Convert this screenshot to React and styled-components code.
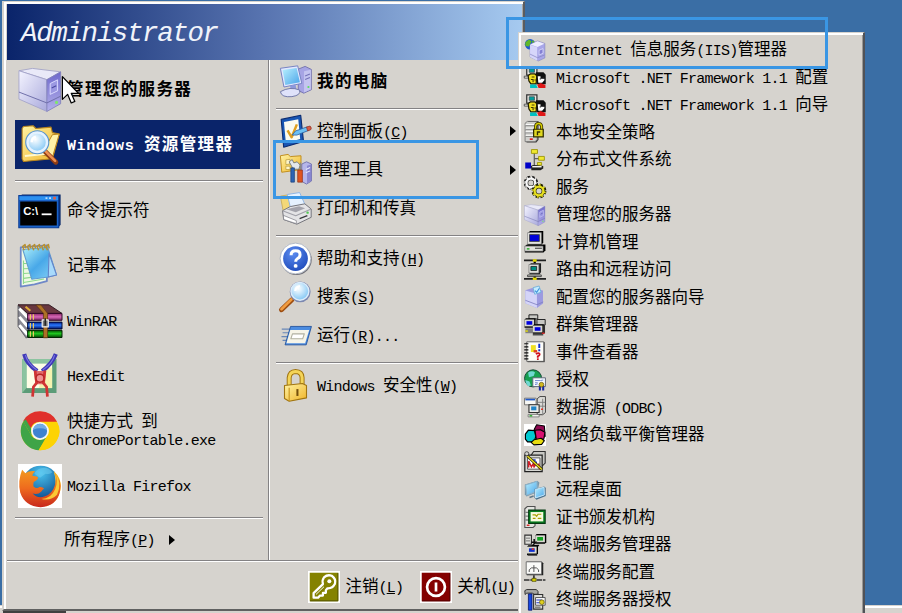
import React from "react";
import styled, { createGlobalStyle, css } from "styled-components";

const GlobalStyle = createGlobalStyle`
  * {
    box-sizing: border-box;
  }
  body {
    margin: 0;
    background: #3a6ea5;
    overflow: hidden;
  }
`;

const Desktop = styled.div`
  position: relative;
  display: flex;
  flex-direction: column;
  width: 902px;
  height: 613px;
  overflow: hidden;
  background: #3a6ea5;
  color: #000;
  font-family: "Noto Sans CJK SC", sans-serif;
  font-size: 16.5px;
  cursor: default;
`;

const StartPanel = styled.div`
  position: relative;
  z-index: 1;
  display: flex;
  flex-direction: column;
  flex: none;
  width: 523px;
  height: 610px;
  margin: 1px 0 -6px 2px;
  border-left: 2px solid #d6d3ce;
  border-top: 1px solid #d6d3ce;
  border-right: 2px solid #5a5c60;
  border-bottom: 2px solid #606060;
  background: #d6d3ce;
  box-shadow: inset 2px 2px 0 #fff, inset -1px 0 0 #a8a6a2;
  padding: 2px 1px 0 3px;
`;

const Header = styled.div`
  flex: none;
  display: flex;
  align-items: center;
  height: 56px;
  padding: 3px 0 0 14px;
  background: linear-gradient(90deg, #0a246a 0%, #5874b0 50%, #a6caf0 100%);
  color: #f0f3fa;
  font: italic 27.5px "Liberation Mono", monospace;
  letter-spacing: -1.375px;
`;

const Columns = styled.div`
  display: flex;
  flex: none;
  height: 500px;
`;

const LeftColumn = styled.div`
  width: 262px;
  padding: 2px 5px 0 8px;
  border-right: 1px solid #848284;
  box-shadow: 1px 0 0 #fff;
`;

const RightColumn = styled.div`
  flex: 1;
  padding: 2px 5px 0 7px;
`;

const Divider = styled.div`
  height: 2px;
  margin: ${({ $gap }) => $gap};
  background: #848284;
  border-bottom: 1px solid #fff;
`;

const bold = css`
  font-weight: 700;
  letter-spacing: 1.375px;
`;

const Label = styled.span`
  white-space: pre;
  line-height: 18px;
  padding-bottom: 3px;
  ${({ $bold }) => $bold && bold}
`;

const Latin = styled.span`
  font-family: "Liberation Mono", monospace;
  font-size: 15px;
  line-height: 0;
  letter-spacing: ${({ $bold }) => ($bold ? "0.62px" : "-0.75px")};
`;

const AppRow = styled.div`
  display: flex;
  align-items: center;
  gap: 5px;
  height: ${({ $selected }) => ($selected ? "49px" : "55px")};
  margin: ${({ $selected }) => ($selected ? "3px 3px 0 0" : "0")};
  padding-left: 3px;
  background: ${({ $selected }) => ($selected ? "#0a246a" : "transparent")};
  color: ${({ $selected }) => ($selected ? "#fff" : "#000")};
`;

const PlaceRow = styled.div`
  display: flex;
  align-items: center;
  gap: 5px;
  height: 38.5px;
  padding-left: 3px;
`;

const AllPrograms = styled.div`
  display: flex;
  align-items: center;
  gap: 14px;
  height: 39px;
  padding-left: 49px;
`;

const Arrow = styled.i`
  flex: none;
  width: 0;
  height: 0;
  border: 5px solid transparent;
  border-left: 6px solid #000;
  border-right: 0;
  margin-left: ${({ $end }) => ($end ? "auto" : "0")};
  margin-right: ${({ $end }) => ($end ? "1px" : "0")};
`;

const Footer = styled.div`
  flex: 1;
  display: flex;
  align-items: center;
  justify-content: flex-end;
  gap: 17px;
  padding-right: 7px;
  padding-top: 3px;
  border-top: 1px solid #848284;
  box-shadow: inset 0 1px 0 #fff;
`;

const FooterButton = styled.div`
  display: flex;
  align-items: center;
  gap: 5px;
`;

const Submenu = styled.div`
  position: absolute;
  z-index: 2;
  left: 518px;
  top: 32px;
  width: 347px;
  height: 600px;
  padding: 3px 0 0 4px;
  background: #d6d3ce;
  border: 1px solid #d6d3ce;
  border-right: 2px solid #505257;
  box-shadow: inset 2px 2px 0 #fff, inset -1px 0 0 #9a9894;
`;

const ToolRow = styled.div`
  display: flex;
  align-items: center;
  gap: 10px;
  height: 27.5px;
  padding-left: 1px;
`;

const Taskbar = styled.div`
  flex: none;
  height: 10px;
  margin-top: 0;
  background: #d6d3ce;
  border-top: 1px solid #d6d3ce;
  box-shadow: inset 0 2px 0 #fff;
  padding: 5px 0 0 3px;
`;

const StartButton = styled.div`
  width: 63px;
  height: 4px;
  background: #404040;
`;

const Highlight = styled.div`
  position: absolute;
  z-index: 3;
  left: ${({ $x }) => $x}px;
  top: ${({ $y }) => $y}px;
  width: ${({ $w }) => $w}px;
  height: ${({ $h }) => $h}px;
  border: 3px solid #3a96e4;
`;

const Pointer = styled.svg`
  position: absolute;
  z-index: 4;
  left: 61px;
  top: 75px;
  width: 18px;
  height: 31px;
`;

const Icon = styled.svg`
  display: block;
  flex: none;
  width: ${({ $size }) => $size}px;
  height: ${({ $size }) => $size}px;
  overflow: visible;
`;

// "&" marks the accelerator letter, as in a Win32 menu resource
function Text({ children, ...rest }) {
  return (
    <Label {...rest}>
      {children.split(/([\x20-\x7e]+)/).map((run, i) => {
        if (i % 2 === 0) return run;
        const at = run.indexOf("&");
        if (at < 0) return <Latin key={i} $bold={rest.$bold}>{run}</Latin>;
        return (
          <Latin key={i} $bold={rest.$bold}>
            {run.slice(0, at)}
            <u>{run[at + 1]}</u>
            {run.slice(at + 2)}
          </Latin>
        );
      })}
    </Label>
  );
}

/* ---------- shapes used by several icons ---------- */

const HiddenDefs = styled.svg`
  position: absolute;
`;

const Gradients = () => (
  <HiddenDefs width="0" height="0">
    <defs>
      <linearGradient id="srvFront" x2="1" y2="1">
        <stop offset="0" stopColor="#f4f4ff" />
        <stop offset="1" stopColor="#a9a9dc" />
      </linearGradient>
      <linearGradient id="srvSide" x2="0" y2="1">
        <stop offset="0" stopColor="#6e68cc" />
        <stop offset="1" stopColor="#b5b2ea" />
      </linearGradient>
      <linearGradient id="gold" x2="1" y2="1">
        <stop offset="0" stopColor="#fff3a4" />
        <stop offset="1" stopColor="#f0b428" />
      </linearGradient>
      <linearGradient id="sky" x2="1" y2="1">
        <stop offset="0" stopColor="#b8f0ff" />
        <stop offset="1" stopColor="#4aa4e8" />
      </linearGradient>
      <radialGradient id="lens" cx=".4" cy=".35" r=".7">
        <stop offset="0" stopColor="#fff" />
        <stop offset="1" stopColor="#7cc4f4" />
      </radialGradient>
      <linearGradient id="pad" x2="1" y2="1">
        <stop offset="0" stopColor="#aef0fa" />
        <stop offset=".5" stopColor="#48a8e8" />
        <stop offset="1" stopColor="#8ad4f8" />
      </linearGradient>
      <linearGradient id="bookA" x2="0" y2="1">
        <stop offset="0" stopColor="#8a2a68" />
        <stop offset=".5" stopColor="#d868b8" />
        <stop offset="1" stopColor="#70205c" />
      </linearGradient>
      <linearGradient id="bookB" x2="0" y2="1">
        <stop offset="0" stopColor="#001a80" />
        <stop offset=".45" stopColor="#2a78ff" />
        <stop offset="1" stopColor="#001060" />
      </linearGradient>
      <linearGradient id="bookC" x2="0" y2="1">
        <stop offset="0" stopColor="#005000" />
        <stop offset=".45" stopColor="#20c820" />
        <stop offset="1" stopColor="#004000" />
      </linearGradient>
      <radialGradient id="globe" cx=".5" cy=".2" r=".8">
        <stop offset="0" stopColor="#48c4f0" />
        <stop offset="1" stopColor="#083c80" />
      </radialGradient>
      <linearGradient id="fox" x2="0" y2="1">
        <stop offset="0" stopColor="#f39a20" />
        <stop offset=".5" stopColor="#ee6a1e" />
        <stop offset="1" stopColor="#c8281c" />
      </linearGradient>
      <radialGradient id="blueBall" cx=".4" cy=".3" r=".8">
        <stop offset="0" stopColor="#5c8cf0" />
        <stop offset="1" stopColor="#1c48b8" />
      </radialGradient>
    </defs>
  </HiddenDefs>
);

const Tower = () => (
  <g strokeLinejoin="round">
    <path d="M.7 2 10.5.3 31 2.8 21 8.5z" fill="#e9e9f8" stroke="#a8a8c8" strokeWidth=".7" />
    <path d="M.7 2 21 8.5V31.6L.7 22.6z" fill="url(#srvFront)" stroke="#a0a0c8" strokeWidth=".6" />
    <path d="M21 8.5 31 2.8V26L21 31.6z" fill="url(#srvSide)" stroke="#8080b8" strokeWidth=".6" />
    <path d="M.7 17.5 21 25.4 31 20.5" fill="none" stroke="#6c6ca8" strokeWidth=".7" />
    <path d="M23.4 11.3 28.8 8.6v8L23.4 19.2z" fill="#9b98e2" stroke="#dcdcff" strokeWidth=".7" />
    <path d="M24.5 14.6l3.3-1.7" stroke="#4a48a0" strokeWidth=".8" />
    <circle cx="28" cy="25" r="1.1" fill="#7ee868" />
  </g>
);

const Screen = ({ x, y, color = "#0000e0" }) => (
  <g transform={`translate(${x} ${y})`}>
    <path d="M0 1 1 0h7v6L7 7H0z" fill="#000" />
    <path d="M0 1h7v5H0z" fill="#d8d8d0" />
    <path d="M1.4 2.2h4.2v2.6H1.4z" fill={color} />
  </g>
);

/* ---------- 32 unit icons, left column ---------- */

const ServerIcon = () => <Tower />;

const ExplorerIcon = () => (
  <g strokeLinejoin="round">
    <path d="M3 4 4 2.5 11 2l2 2 11-1 1 4 5 1-5 18-21 2-1-2z" fill="url(#gold)" stroke="#b8841c" strokeWidth=".8" />
    <path d="M25 8.5 30 8 25 25l-8-2z" fill="#fff2a8" stroke="#b8841c" strokeWidth=".7" />
    <path d="M5 24 24 22" stroke="#fff9d0" strokeWidth="1.6" />
    <path d="M19 20 27.5 28.5" stroke="#8e3c14" strokeWidth="3.6" strokeLinecap="round" />
    <path d="M19.5 20 27 27.5" stroke="#ee9050" strokeWidth="1.8" strokeLinecap="round" />
    <circle cx="14" cy="14" r="7.3" fill="url(#lens)" stroke="#e4f2ff" strokeWidth="2.2" />
    <circle cx="14" cy="14" r="8.4" fill="none" stroke="#5894cc" strokeWidth=".8" />
    <path d="M10 14a4 4 0 0 1 3-4" fill="none" stroke="#fff" strokeWidth="1.8" />
  </g>
);

const ConsoleIcon = () => (
  <g>
    <path d="M1 5.2 3 4h28v22l-2 2.4z" fill="#082868" />
    <path d="M.6 4.8h29v23.4H.6z" fill="#1a62c8" stroke="#0a3c94" strokeWidth=".8" />
    <path d="M1 5.2h28.2V8H1z" fill="#2c90f0" />
    <path d="M1.6 9h26.6v17.6H1.6z" fill="#000" />
    <path d="M20 6.6h1.4M22.6 6.6H24" stroke="#b8dcff" strokeWidth="1.2" />
    <path d="M25.6 5.6h2v2h-2z" fill="#e06048" />
    <text x="3.8" y="18.6" fill="#fff" fontFamily="Liberation Sans, sans-serif" fontWeight="700" fontSize="8.2">
      C:\
    </text>
    <path d="M17.2 18.4h7.2" stroke="#fff" strokeWidth="1.3" />
  </g>
);

const NotepadIcon = () => (
  <g strokeLinejoin="round">
    <path d="M2 2.5 21 1 21 27 12 29.4 2 31z" fill="#eef8e4" stroke="#7088c8" strokeWidth="1.3" />
    <path d="M4 12v17M4 14l15 .5M4 18l15-.5M4 21.5l15-1M4 25l15-2M4 28l15-2.5" stroke="#8ed88c" strokeWidth=".8" fill="none" />
    <path d="M3.5 4 21.6 2.4 28 22.5l-6 1.5-12 1.6z" fill="url(#pad)" stroke="#609cd0" strokeWidth=".8" />
    <path d="M22.6 7 28 22.5 22 24z" fill="#a8dafb" stroke="#6484c8" strokeWidth=".8" />
    {[4.5, 8, 11.5, 15, 18.5, 21.5].map((x) => (
      <path key={x} d={`M${x} 4.6 ${x - 1.2} 1.8 ${x + 0.6} .4 ${x + 1.2} 3.2`} fill="none" stroke="#b89030" strokeWidth="1.1" />
    ))}
  </g>
);

const RarIcon = () => (
  <g strokeLinejoin="round">
    <path d="M0 4.8 8 13v13l-2 2.5L0 20z" fill="#8a8a94" stroke="#404048" strokeWidth=".5" />
    <path d="M1 7 7 13.5M1 13l6 7M1 19l6 7" stroke="#fff" strokeWidth="2.2" />
    <path d="M0 4.2h22.5L32 10.5H7z" fill="#6a3840" stroke="#301820" strokeWidth=".7" />
    <path d="M7 10.5h25v5H7z" fill="url(#bookA)" stroke="#300828" strokeWidth=".7" />
    <path d="M7 16.8h25v5H7z" fill="url(#bookB)" stroke="#000830" strokeWidth=".7" />
    <path d="M7 22.8h25V28H7z" fill="url(#bookC)" stroke="#002000" strokeWidth=".7" />
    <path d="M9 11v4M9 17.5v4M9 23.5v4M11.2 11v4M11.2 17.5v4M11.2 23.5v4" stroke="#e8c860" strokeWidth=".9" />
    <path d="m13 4.4 5.5 6v17.8h3V10.4l-4.8-6z" fill="#ad7026" stroke="#5c3410" strokeWidth=".5" />
    <path d="M5.5 5.6 9 8.6" stroke="#e0ac38" strokeWidth="1.5" />
    <path d="M17.6 15.2h4.4v5h-4.4z" fill="#777" stroke="#eee" strokeWidth=".9" />
    <path d="M19.8 14v5.4" stroke="#222" strokeWidth="1.1" />
  </g>
);

const HexEditIcon = () => (
  <g>
    <path d="M3 3.6h25v24.8H3z" fill="#5c9c78" />
    <path d="M3 3.6h25l-3.4 3.6H6.6v17L3 28.4z" fill="#8cc4a0" />
    <path d="M6.4 7h18.4v17.8H6.4z" fill="#fdfde6" />
    <path d="M20 10h4.8v14.8H15z" fill="#f5f3b0" />
    <path d="M4.5 0Q6 7 14 12.4M27.5 0Q25 7 17.5 12.4" fill="none" stroke="#4038b8" strokeWidth="3" />
    <path d="M5.4.8Q7 7 13.6 11.6M26.6.8Q25 7 18 11.6" fill="none" stroke="#7878e0" strokeWidth=".8" />
    <path d="M11.6 12.4 20.4 12.4 19.6 22h-7z" fill="#e06c6c" />
    <path d="m12.4 12 1.2 9-2.4 3-.6 7M19.6 12l-1.2 9 2.4 3 .6 7" fill="none" stroke="#d03434" strokeWidth="2" />
    <circle cx="16" cy="17.6" r="2.9" fill="#f09090" stroke="#b82424" strokeWidth="1.1" />
  </g>
);

const ChromeIcon = () => (
  <g>
    <circle cx="16" cy="16" r="14" fill="#fdd303" />
    <path d="M3.9 9A14 14 0 0 0 15 30l6-10.4A7 7 0 0 1 10 19.6z" fill="#3fa447" />
    <path d="M3.9 9 10 19.6l-.6-6z" fill="#3fa447" />
    <path d="M16 9h12.2A14 14 0 0 1 15 30l6.5-10z" fill="#fdd303" />
    <path d="M3.9 8.6A14 14 0 0 1 28.4 9.2H16a7 7 0 0 0-6.6 4.6z" fill="#e0302c" />
    <path d="M3.9 9 9.4 18V14L5.6 7.4z" fill="#3fa447" />
    <circle cx="16" cy="16" r="6.5" fill="#f4f6f8" />
    <circle cx="16" cy="16" r="5.2" fill="#3e82d0" />
    <path d="M11 15a5.1 5.1 0 0 1 10 0q-5-2-10 0z" fill="#74ace4" />
  </g>
);

const FirefoxIcon = () => (
  <g>
    <path d="M0 0h32v32H0z" fill="#fff" />
    <circle cx="16.5" cy="14.8" r="13.6" fill="url(#globe)" />
    <path d="M17 3q5-1 8 3-2 2-5 1l-4 3-4-3q1-3 5-4z" fill="#70cdf0" opacity=".55" />
    <path d="M26 5.2Q32 10 31 18 29.5 28 20 31q6-5 7-12 1-7-1-13.8z" fill="#ffd83c" />
    <path
      d="M3 4.2 5.4 6.8Q8 4.6 12.5 5.2 10.5 6.7 10.6 8.8q3.4-.2 4 1.2-.3 1.8-3.2 3-.6 2.8 0 3.6 2.4 1.6 4.2.2 2.4-.4 3.4 1.2-1.2.6-2 2-2.5 2.6-6.4 1.5 3.6 4 9 2 5.6-2 7.4-8.6 1.3-5-.9-9.4 6.5 6.5 4.5 14.4Q28.2 30.8 16.4 31.4 5 31 1.6 20.8-.3 12.2 3 4.2z"
      fill="url(#fox)"
    />
    <path d="M27 6.4q2.5 6 0 12Q24 25.4 17 25.4q7 1.6 11.4-3Q32.4 13.6 27 6.4z" fill="#fbc934" />
  </g>
);

/* ---------- 24 unit icons, right column ---------- */

const ComputerIcon = () => (
  <g strokeLinejoin="round">
    <path d="m14 3 5-2 4.5 2.2V18L18 20.5l-4-2z" fill="#a6a4e4" stroke="#6a68a8" strokeWidth=".6" />
    <path d="M18.2 4.6V20l5-2.2V3.4z" fill="#c4c4f0" />
    <path d="M19 8l3.5-1.4M19 10.5l3.5-1.4" stroke="#7472b8" strokeWidth=".8" />
    <circle cx="21.4" cy="16" r=".8" fill="#5ce060" />
    <path d="M1 2.4 13.6.6l3 12.8L3.6 16z" fill="#e2e8ff" stroke="#7480c0" strokeWidth=".7" />
    <path d="m2.6 3.6 10.2-1.5 2.4 10.4L4.6 14.6z" fill="url(#sky)" />
    <path d="m8 15 4-.8.8 4.2H8.6z" fill="#8c98dc" />
    <path d="M1 19.4q7-4 14-1.2 1.2 3.8-5.6 4.8-7.6.8-8.4-3.6z" fill="#dfe2fa" stroke="#7078a8" strokeWidth=".7" />
  </g>
);

const ControlPanelIcon = () => (
  <g strokeLinejoin="round">
    <path d="m1.6 3.2 14.2-3 2 19L3.4 23.4z" fill="#1856b4" stroke="#0c2c70" strokeWidth=".8" />
    <path d="m3.6 5 10.4-2 1.4 14.4L5 20.4z" fill="#fbfbf0" />
    <path d="m6.2 11.2 3 5L13 6.8" fill="none" stroke="#e0a020" strokeWidth="1.8" />
    <path d="M9.6 14.6 12 11.6 20.6 8.6l1 2.6-8.6 3.4z" fill="#6cc0f4" stroke="#2c60a0" strokeWidth=".6" />
    <path d="M20 8.8 22.6 8q1.6 1.6.4 2.8l-2.2.8z" fill="#d85c48" stroke="#8c2c1c" strokeWidth=".5" />
  </g>
);

const AdminToolsIcon = () => (
  <g strokeLinejoin="round">
    <path d="M1 2 6.6 1l1.6 1.6L16 2v10l-14 2z" fill="url(#gold)" stroke="#c08c1c" strokeWidth=".7" />
    <path d="m5 5 3-.4V8l-3 .4zM5 9.6h3V12H5z" fill="#fff6c8" stroke="#b49838" strokeWidth=".5" />
    <path d="m16.6 8 3.4-1.6L23.6 8v12.4L20 22.6l-3.6-2z" fill="#b6b6ea" stroke="#6868a8" strokeWidth=".6" />
    <path d="M20.4 9.2v13l3-2V8.4z" fill="#8886d0" />
    <path d="M19.6 12l3-1.4M19.6 14.4l3-1.4" stroke="#e8e8ff" strokeWidth=".8" />
    <path d="m7.4 6.4 2.2-1.6 1.2 2.4 2.4-.8 2.2 2.4-1 3h-4z" fill="#e4e8ec" stroke="#687078" strokeWidth=".6" />
    <path d="M8.6 10.8h2.6v10.4H8.6z" fill="#2c64b4" stroke="#183c78" strokeWidth=".5" />
    <path d="M15.6 7v6" stroke="#888" strokeWidth="1" />
    <path d="M13.6 12.4H17v8.8h-3.4z" fill="#e05420" stroke="#902c10" strokeWidth=".5" />
  </g>
);

const PrinterIcon = () => (
  <g strokeLinejoin="round">
    <path d="M1 3 8 1.8l3 14-7.4 1z" fill="#f4d878" stroke="#c0a048" strokeWidth=".5" />
    <path d="m6 1.8 9-1.4 4 9-10.4 3z" fill="#e6f2ff" stroke="#8cb4e4" strokeWidth=".7" />
    <path d="m2.6 13.6 5.6-3 10.6-2 4.6 3.8v6L13 23.4 3.4 20z" fill="#e4e4e6" stroke="#707078" strokeWidth=".7" />
    <path d="m2.6 13.6 9.6 3.6 11.2-4.8" fill="none" stroke="#a0a0a8" strokeWidth=".8" />
    <path d="m5.4 12.6 6.8 2.2 6.8-3-4.4-1.4z" fill="#a4a4ac" />
    <path d="m3.2 17 9.4 3.8V23L3.4 20z" fill="#fff" stroke="#787880" strokeWidth=".5" />
    <path d="m15 19.4 5.6-2.2" stroke="#38383c" strokeWidth="1" />
    <circle cx="20.8" cy="15" r=".9" fill="#50c850" />
  </g>
);

const HelpIcon = () => (
  <g>
    <circle cx="12.6" cy="12.8" r="11.2" fill="#707078" />
    <circle cx="12" cy="12" r="11.2" fill="#fff" stroke="#a4acbc" strokeWidth=".6" />
    <circle cx="12" cy="12" r="9" fill="url(#blueBall)" />
    <path d="M8.8 9.6q0-3.2 3.3-3.2 3.2 0 3.2 2.8 0 1.8-1.8 2.8-1.4.8-1.4 2.4" fill="none" stroke="#fff" strokeWidth="2.2" />
    <circle cx="12.1" cy="17.4" r="1.4" fill="#fff" />
  </g>
);

const SearchIcon = () => (
  <g>
    <path d="M1.8 21.6 9.4 14.4" stroke="#9c4c10" strokeWidth="3.6" strokeLinecap="round" />
    <path d="M1.8 21.2 9 14.2" stroke="#f09c40" strokeWidth="2" strokeLinecap="round" />
    <circle cx="15.4" cy="8.6" r="7.6" fill="#7c88b0" />
    <circle cx="15.2" cy="8.2" r="6.5" fill="url(#lens)" stroke="#dcecfa" strokeWidth="1" />
    <path d="M11.8 8a4 4 0 0 1 3.4-3.6" fill="none" stroke="#fff" strokeWidth="1.6" />
  </g>
);

const RunIcon = () => (
  <g strokeLinejoin="round">
    <path d="M2 7.4h6M2.6 10h5M1.8 12.8h5M2.6 15.6h3" stroke="#6888b8" strokeWidth=".9" />
    <path d="M8.4 5.4H23.6L19.8 18.8H4.4z" fill="#4c8ce0" stroke="#1c4c98" strokeWidth=".6" />
    <path d="M8.2 8H22L19 17.6H5.4z" fill="#f6f4e8" />
    <path d="M9.8 10.8h8.6l-1.2 3.6H8.6z" fill="#fff" stroke="#b0b0a0" strokeWidth=".8" />
  </g>
);

const LockIcon = () => (
  <g strokeLinejoin="round">
    <path d="M7.4 13V6.4q.4-4.4 4.6-4.6 4.6.2 4.8 4.4v5.4" fill="none" stroke="#a07410" strokeWidth="3.6" />
    <path d="M7.4 13V6.4q.4-4.4 4.6-4.6 4.6.2 4.8 4.4v5.4" fill="none" stroke="#f4d458" strokeWidth="2.2" />
    <path d="M4 12 17 10.6l3 1.4v9L7.4 23.4 4 21.4z" fill="url(#gold)" stroke="#a07410" strokeWidth=".8" />
    <path d="M7.4 13.6v9.6" stroke="#c8941c" strokeWidth=".8" />
    <path d="M13.4 14.6v5" stroke="#74500c" strokeWidth="1.5" />
  </g>
);

/* ---------- 16 unit icons, tools submenu ---------- */

const IisIcon = () => (
  <g strokeLinejoin="round">
    <circle cx="4.4" cy="3.8" r="3.8" fill="#2058d0" />
    <path d="M1 2.4 3.6.4 5.6 1.6 3.6 5.4 1 5zM6 .8 8 2.4 6 3.2z" fill="#60b828" />
    <path d="m4.4 4 5.4-2.6 5.4 1.8v10.6L10.4 16l-6-3z" fill="#a8a6e8" stroke="#8484b8" strokeWidth=".4" />
    <path d="M4.4 4.2 9.6 6v9.8L4.4 13z" fill="#d6d6fa" />
    <path d="M4.6 4 9.8 1.6l5 1.8L9.8 5.8z" fill="#eeeeff" />
    <path d="M11 8.2 13.8 7v3.4L11 11.6z" fill="#8480d4" stroke="#e8e8ff" strokeWidth=".5" />
    <path d="m4.4 11 5.4 2.6 5.2-2" fill="none" stroke="#8482c0" strokeWidth=".5" />
  </g>
);

const DotNetIcon = () => (
  <g>
    <path d="M2 .6h7.4v6H2z" fill="#e8e8e4" stroke="#303030" strokeWidth=".9" />
    <path d="M3.8 2h3.8v2.6H3.8z" fill="#00a0a0" stroke="#404040" strokeWidth=".5" />
    <path d="M.2 7.4h3.6v1.4H.2z" fill="#f0f0f0" stroke="#404040" strokeWidth=".6" />
    <path d="M8.6 4.6h5.6l1.6 1.8v6.8H9.2z" fill="#101010" />
    <path d="M3 7 4.6 5.8H8L9.2 7v1.4L8.8 13H5L3.6 11z" fill="#f0e020" stroke="#201c00" strokeWidth=".9" />
    <path d="M5.6 8h2M5 9.8h1.6v2M7.6 10.2h1" fill="none" stroke="#403800" strokeWidth=".8" />
    <path d="M10 7.4h2v1.8h2.8v1.2l-1.6 1.8h-2.8z" fill="#fff" />
    <path d="M11.4 9.4h1M14 8v1" stroke="#202020" strokeWidth=".7" />
    <path d="M4.4 13.4h4.4L10 16H4.4z" fill="#00c0c0" />
    <path d="M9.6 13.6 12 12.4l3.6 1.4V16h-5z" fill="#e01818" />
  </g>
);

const SecurityIcon = () => (
  <g>
    <path d="M1.8 1.6 3.4 0H10.6v13.6L9 15.6H1.8z" fill="#404040" />
    <path d="M.8 1.6 2.4.3h7.2v13l-1.4 1.7H.8z" fill="#d0d0cc" stroke="#606060" strokeWidth=".5" />
    <path d="M1.2 3.4h6.4M1.2 6h6.4M1.2 8.6h6.4M1.2 11.2h6.4" stroke="#808080" strokeWidth=".7" />
    <path d="M1.2 2.6h6.4M1.2 5.2h6.4M1.2 7.8h6.4M1.2 10.4h6.4" stroke="#fff" strokeWidth=".7" />
    <path d="M4.2 13.2h2.2" stroke="#e02020" strokeWidth="1.2" />
    <path d="M8.4 6.6V4Q8.6 1.8 10.6 1.8T12.8 4v2.6" fill="none" stroke="#403800" strokeWidth="2.2" />
    <path d="M8.4 6.6V4Q8.6 1.8 10.6 1.8T12.8 4v2.6" fill="none" stroke="#d8d000" strokeWidth="1" />
    <path d="M7 6h7v5.6H7z" fill="#e0d820" stroke="#302c00" strokeWidth=".9" />
    <path d="M9.8 10.4V8h2" stroke="#302c00" fill="none" />
  </g>
);

const DfsIcon = () => (
  <g>
    <path d="M7.5 3v9.5M7.5 7h4M7.5 12h4" fill="none" stroke="#606060" strokeWidth=".9" />
    <path d="M5.4.4h4.4v2.8H5.4zM10.6 5.4h4.2v2.8h-4.2zM9.8 9.8h3v2h-3z" fill="#f0e830" stroke="#989000" strokeWidth=".6" />
    <path d="M.9 9.8h4.2v4.4H.9z" fill="#0000c8" />
    <path d="M5 12.4 6.6 11.6 14 12.4v1.8l-2 1.2H5.4z" fill="#202020" />
    <path d="M6 12.4h6.8v1H6z" fill="#fff" />
  </g>
);

const ServicesIcon = () => (
  <g fill="none">
    <circle cx="5" cy="5" r="4" stroke="#101010" strokeWidth="2.4" strokeDasharray="2 1.14" />
    <circle cx="5" cy="5" r="3.2" stroke="#202020" strokeWidth="2.6" />
    <circle cx="5" cy="5" r="3.2" stroke="#f8f8f8" strokeWidth="1.7" />
    <circle cx="5" cy="5" r="4.2" stroke="#f8f8f8" strokeWidth="1.2" strokeDasharray="1 2.14" strokeDashoffset="-.5" />
    <circle cx="10.9" cy="10.9" r="4.2" stroke="#202000" strokeWidth="2.4" strokeDasharray="2.1 1.2" />
    <circle cx="10.9" cy="10.9" r="3.2" stroke="#303000" strokeWidth="2.6" />
    <circle cx="10.9" cy="10.9" r="3.2" stroke="#e8e020" strokeWidth="1.7" />
    <circle cx="10.9" cy="10.9" r="4.4" stroke="#e8e020" strokeWidth="1.2" strokeDasharray="1.1 2.2" strokeDashoffset="-.5" />
  </g>
);

const SmallServerIcon = () => (
  <g transform="translate(0 .3) scale(.49)">
    <Tower />
  </g>
);

const ComputerMgmtIcon = () => (
  <g>
    <path d="M3 1.4 4.4 0H14v8.6L12.6 10H3z" fill="#000" />
    <path d="M2.6 1.2h10v8.4h-10z" fill="#e4e4e0" stroke="#808080" strokeWidth=".5" />
    <path d="M4 2.6h7.2v5H4z" fill="#0000d8" stroke="#404040" strokeWidth=".6" />
    <path d="m.6 11 1.6-1.2H15.6V14l-1.4 1.7H.6z" fill="#000" />
    <path d="M.6 11h13.2v3.6H.6z" fill="#e0e0dc" stroke="#808080" strokeWidth=".5" />
    <path d="M2 13h2" stroke="#20a820" />
    <path d="M8 12.6h5" stroke="#606060" />
  </g>
);

const RoutingIcon = () => (
  <g>
    <path d="M0 1h16M0 14.5h16" stroke="#202020" strokeWidth="1.3" />
    <path d="M7.8 1v2M7.8 12v2.5" stroke="#000" strokeWidth="1.6" />
    <path d="M6.4.2h2.8v1.8H6.4zM6.4 13.4h2.8v1.8H6.4z" fill="#e0d800" />
    <path d="M4 4.2 5 3h7.4v6.4L11.4 11H4z" fill="#202020" />
    <path d="M3.6 4h7.2v6.2H3.6z" fill="#e4e4e0" stroke="#707070" strokeWidth=".5" />
    <path d="M5 5.4h4.2v3H5z" fill="#008c80" stroke="#202020" strokeWidth=".6" />
    <path d="M2.6 11.6h10v1.2h-10z" fill="#c0c0bc" stroke="#202020" strokeWidth=".5" />
  </g>
);

const ConfigServerIcon = () => (
  <g>
    <path d="m1 3 5-1.6 7.8 1.8v9.6L9.4 16 1 12.6z" fill="#9c9ae0" />
    <path d="M1 3.2 9.4 5.6V16L1 12.6z" fill="#d4d4f8" />
    <path d="M1 10.4 9.4 13.6 14 11.6" fill="none" stroke="#8080c0" strokeWidth=".6" />
    <path d="M6.6 1.2 11 0l1.4 4.6L7.8 6z" fill="#c4ecff" stroke="#6cacd8" strokeWidth=".6" />
    <path d="m8 3.4 1.2 1.2 2-3" fill="none" stroke="#3c94dc" strokeWidth=".8" />
  </g>
);

const ClusterIcon = () => (
  <g>
    <path d="M3.6.6H10v3H3.6z" fill="#c8c8c4" stroke="#202020" strokeWidth=".7" />
    <Screen x={0.4} y={3} />
    <path d="M1 10.4h5.4V14H1z" fill="#808080" />
    <path d="M9.4 4h6v4h-6z" fill="#c8c8c4" stroke="#202020" strokeWidth=".7" />
    <Screen x={6.4} y={7.4} />
    <path d="M6.4 14.6H14v1H6.4z" fill="#404040" />
    <path d="M1 12.4h1.8" stroke="#e8e000" />
    <path d="M14.8 8v6" stroke="#303030" />
    <path d="M13 14h2" stroke="#d02020" />
  </g>
);

const EventIcon = () => (
  <g>
    <path d="M2.6.8H15v14.6H2.6z" fill="#303030" />
    <path d="M2 .6h12.4v14.2H2z" fill="#fdfdf8" stroke="#505050" strokeWidth=".6" />
    <path d="M.2 2h3M.2 4.2h3M.2 6.4h3M.2 8.6h3M.2 10.8h3M.2 13h3" stroke="#101010" strokeWidth=".9" />
    <path d="M5 3h3.6v5H5z" fill="#f0e020" />
    <path d="M10.4 2h1.4v3h-1.4zM10.4 6h1.4v1.4h-1.4z" fill="#1030d0" />
    <path d="M8.6 9.4q2.8-1.4 2.8.4 0 .8-1.4 1.4v1" fill="none" stroke="#d01020" strokeWidth="1.3" />
    <path d="M9.4 13.2h1.3" stroke="#d01020" strokeWidth="1.2" />
    <path d="M7 6.6h2.6v1.8H7z" fill="#e04020" />
  </g>
);

const LicenseIcon = () => (
  <g>
    <circle cx="6.6" cy="6.8" r="6.2" fill="#18a050" stroke="#184838" strokeWidth=".7" />
    <path d="M3 2.6q3-2 5 0L7 5 3.6 6zM1 8l3 1 1 3-2 .6Q1 10.6 1 8z" fill="#70d8d0" />
    <path d="M6.4 6.4h9.2v6.4H6.4z" fill="#f4f8ff" stroke="#606878" strokeWidth=".7" />
    <path d="M8 8.4h4M8 10h2M12 8.4l2-.4M8 11.4l2-.6" stroke="#7088d0" strokeWidth=".7" />
    <path d="M10.8 12h1.5v3.6h-1.5zM13.2 12h1.5v3.6h-1.5z" fill="#1828a0" />
    <circle cx="12.7" cy="11.4" r="1.7" fill="#d0b820" stroke="#605010" strokeWidth=".5" />
  </g>
);

const OdbcIcon = () => (
  <g>
    <path d="m9.6 2 2-1.6h4V12l-2 1.6h-4z" fill="#dcdcd8" stroke="#404040" strokeWidth=".7" />
    <path d="M10 4.6h5.4M10 7.4h5.4M13.6 2v11" stroke="#808080" strokeWidth=".7" />
    <path d="M.4 1.6h8.4v4.8H.4z" fill="#f8f8f4" stroke="#606060" strokeWidth=".6" />
    <path d="M1 2.6h7" stroke="#2058c8" strokeWidth="1.2" />
    <path d="M3.6 6.4H11V12H3.6z" fill="#ecece8" stroke="#303030" strokeWidth=".8" />
    <path d="M5.2 7.6h3.8v2.8H5.2z" fill="#2084c8" />
    <path d="M3 13.4h8v1.8H3z" fill="#f0f0ec" stroke="#606060" strokeWidth=".5" />
    <path d="M4 14.4h2" stroke="#20a820" />
    <path d="M12.4 9.6h1.4" stroke="#e03020" />
  </g>
);

const NlbIcon = () => (
  <g strokeLinejoin="round">
    <path d="M0 0h16v16H0z" fill="#fff" />
    <path d="m7.4 4 1.8-3.4 5.6.8L15.4 9l-4 2.6z" fill="#900850" stroke="#000" strokeWidth=".8" />
    <path d="m1 7.4 2.2-3 4.4.4L8.6 9l-1.2 4H2.6L1 11z" fill="#00c8d0" stroke="#000" strokeWidth=".9" />
    <path d="m8 4.6 4-.4 3.2 1.8-.8 5-5.4.4z" fill="#d81070" stroke="#000" strokeWidth=".8" />
    <path d="m7.4 11.4 5-1 2.4 1.8-2 2.6-5.6.4-2-1.8z" fill="#e8dc10" stroke="#000" strokeWidth=".8" />
  </g>
);

const PerfIcon = () => (
  <g>
    <path d="m5 3.4 2-3h8.4v8.4l-2 2z" fill="#c8c8c4" stroke="#303030" strokeWidth=".8" />
    <path d="M.6 3h12.6v12H.6z" fill="#d8d8d4" stroke="#202020" strokeWidth=".9" />
    <path d="M2.6 5h9v8.2h-9z" fill="#fff" stroke="#404040" strokeWidth=".6" />
    <path d="M3.4 12V7.4l2 4.2 1.8-3.2V12l1.6-3 2 3V9" fill="none" stroke="#d02028" strokeWidth="1.1" />
    <path d="M6 6.4h2V8M9 7.6v3" fill="none" stroke="#2038c8" strokeWidth=".9" />
    <path d="M2.4 3.6 13 13.4" stroke="#303000" strokeWidth="2" />
    <path d="M2.4 3.6 13 13.4" stroke="#f0e020" strokeWidth=".9" />
    <circle cx="2" cy="2" r="1.5" fill="#d0d0cc" stroke="#303030" strokeWidth=".6" />
  </g>
);

const RemoteIcon = () => (
  <g strokeLinejoin="round">
    <path d="m.6 4 9-2.8 1.6 1.4L9.8 9.6l-8 3.2L.6 11z" fill="#7898ac" />
    <path d="m1.2 4.4 8.2-2.6.2 7-7.6 3z" fill="url(#sky)" stroke="#8cb4cc" strokeWidth=".7" />
    <path d="m7.6 7.2 7-1.8 1.2 1v6L9 15l-1.4-1.4z" fill="#48708c" />
    <path d="m8.2 7.6 6.4-1.6.2 5.6-6.4 2.2z" fill="url(#sky)" stroke="#c8e8fa" strokeWidth=".7" />
    <path d="m4 13.4 3-1" stroke="#607888" strokeWidth="1.2" />
  </g>
);

const CertIcon = () => (
  <g>
    <path d="M.6 2 2.4.4H8v14L6.6 15.6H.6z" fill="#e4e4e0" stroke="#505050" strokeWidth=".8" />
    <path d="M1 4.6h3M1 7.4h3M1 10.2h3" stroke="#808080" />
    <path d="M3.4 3h12v9.6h-12z" fill="#088020" stroke="#043810" strokeWidth=".8" />
    <path d="M4.8 4.4h9.2v6.8H4.8z" fill="#fbfbe0" />
    <path d="M6.2 6.4h2l1 1 1-1.4h2.4M6.4 9h2M10 9h2.6" fill="none" stroke="#a8a000" strokeWidth=".9" />
    <path d="M2 14h2" stroke="#d82020" />
  </g>
);

const TsManagerIcon = () => (
  <g>
    <path d="M.6.8h4.8v6.6H.6z" fill="#e0e0dc" stroke="#303030" strokeWidth=".8" />
    <path d="M1.4 3h3M1.4 5h3" stroke="#707070" strokeWidth=".7" />
    <Screen x={8.2} y={0} color="#10a020" />
    <path d="M5.4 6h3L6 8.6l5-.2M7.4 6.4V3.6" fill="none" stroke="#101010" strokeWidth="1.1" />
    <Screen x={2.2} y={8.2} color="#1030d0" />
    <path d="M5.6 10.4h1.6v1.2H5.6z" fill="#e03020" />
    <path d="M2.6 14.8h7v1h-7z" fill="#303030" />
  </g>
);

const TsConfigIcon = () => (
  <g>
    <path d="M2 .6h11l1 1v8.8H2z" fill="#202020" />
    <path d="M1.6.6h11.2v9H1.6z" fill="#fafaf8" stroke="#606060" strokeWidth=".6" />
    <path d="M7.2 3v2M3.8 8V6.4L5.4 5h3.6l1.6 1.4V8M7.2 5v3" fill="none" stroke="#505050" strokeWidth=".7" />
    <path d="M7.2 10.4v3" stroke="#303030" strokeWidth="1.2" />
    <path d="M0 13.8h15.6" stroke="#303030" strokeWidth="1.2" strokeDasharray="4 .6" />
    <path d="M5.8 12.6h3v2.2h-3z" fill="#d8d000" stroke="#484400" strokeWidth=".5" />
  </g>
);

const TsLicenseIcon = () => (
  <g>
    <path d="M.6 1.2 2 .4h7l1.2 1.4v2H7.4L6 3H2L.8 4z" fill="#a8a8a4" stroke="#303030" strokeWidth=".7" />
    <path d="M3.2 3.6h2.6v11.8H3.2z" fill="#1848e0" stroke="#081870" strokeWidth=".6" />
    <path d="M7 4h6.6v10.6H7z" fill="#dcdcd8" stroke="#303030" strokeWidth=".8" />
    <path d="M8.4 6.2h7v5.6h-7z" fill="#f8f8fc" stroke="#404040" strokeWidth=".6" />
    <path d="M9 8h4M9 10h2.6" stroke="#2038c0" strokeWidth=".8" />
    <circle cx="13" cy="9.6" r="1.7" fill="#e0d020" stroke="#605800" strokeWidth=".5" />
    <path d="M8 13.2h4" stroke="#606060" strokeWidth=".8" />
  </g>
);

/* ---------- footer icons ---------- */

const LogOffIcon = () => (
  <g>
    <path d="M0 0h24v24H0z" fill="#fff" />
    <path d="M1.3 1.3h21.4v21.4H1.3z" fill="#848200" />
    <path d="M22.4 1.6v20.8H1.6" fill="none" stroke="#505000" strokeWidth=".7" />
    <path
      d="M12 4.8q2.6-2.4 5.8-1.2 3.4 2.4 2.4 6-1.8 3.6-5.6 3.4l-1.2 1.4v2h-2.2v2H9L7.6 20H4.2v-3.4l7-6.8q-.8-3 .8-5z"
      fill="none"
      stroke="#fff"
      strokeWidth="1.7"
      strokeLinejoin="round"
    />
    <circle cx="16" cy="7.6" r="1.5" fill="#fff" />
    <path d="m6 17.6 6-5.8" stroke="#fff" strokeWidth=".7" />
  </g>
);

const ShutDownIcon = () => (
  <g>
    <path d="M0 0h24v24H0z" fill="#fff" />
    <path d="M1.3 1.3h21.4v21.4H1.3z" fill="#840000" />
    <path d="M22.4 1.6v20.8H1.6" fill="none" stroke="#500000" strokeWidth=".7" />
    <circle cx="12" cy="12" r="6.7" fill="none" stroke="#fff" strokeWidth="2" />
    <path d="M12 8.6v6.8" stroke="#fff" strokeWidth="2" />
  </g>
);

const pinned = [
  { label: "管理您的服务器", icon: ServerIcon, bold: true },
  { label: "Windows 资源管理器", icon: ExplorerIcon, bold: true, selected: true },
];

const recent = [
  { label: "命令提示符", icon: ConsoleIcon },
  { label: "记事本", icon: NotepadIcon },
  { label: "WinRAR", icon: RarIcon },
  { label: "HexEdit", icon: HexEditIcon },
  { label: "快捷方式 到\nChromePortable.exe", icon: ChromeIcon },
  { label: "Mozilla Firefox", icon: FirefoxIcon },
];

const places = [
  [{ label: "我的电脑", icon: ComputerIcon, bold: true }],
  [
    { label: "控制面板(&C)", icon: ControlPanelIcon, more: true },
    { label: "管理工具", icon: AdminToolsIcon, more: true },
    { label: "打印机和传真", icon: PrinterIcon },
  ],
  [
    { label: "帮助和支持(&H)", icon: HelpIcon },
    { label: "搜索(&S)", icon: SearchIcon },
    { label: "运行(&R)...", icon: RunIcon },
  ],
  [{ label: "Windows 安全性(&W)", icon: LockIcon }],
];

const tools = [
  ["Internet 信息服务(IIS)管理器", IisIcon],
  ["Microsoft .NET Framework 1.1 配置", DotNetIcon],
  ["Microsoft .NET Framework 1.1 向导", DotNetIcon],
  ["本地安全策略", SecurityIcon],
  ["分布式文件系统", DfsIcon],
  ["服务", ServicesIcon],
  ["管理您的服务器", SmallServerIcon],
  ["计算机管理", ComputerMgmtIcon],
  ["路由和远程访问", RoutingIcon],
  ["配置您的服务器向导", ConfigServerIcon],
  ["群集管理器", ClusterIcon],
  ["事件查看器", EventIcon],
  ["授权", LicenseIcon],
  ["数据源 (ODBC)", OdbcIcon],
  ["网络负载平衡管理器", NlbIcon],
  ["性能", PerfIcon],
  ["远程桌面", RemoteIcon],
  ["证书颁发机构", CertIcon],
  ["终端服务管理器", TsManagerIcon],
  ["终端服务配置", TsConfigIcon],
  ["终端服务器授权", TsLicenseIcon],
];

function AppItem({ label, icon: Drawing, bold, selected }) {
  return (
    <AppRow $selected={selected}>
      <Icon $size={44} viewBox="0 0 32 32">
        <Drawing />
      </Icon>
      <Text $bold={bold}>{label}</Text>
    </AppRow>
  );
}

function App() {
  return (
    <Desktop>
      <GlobalStyle />
      <Gradients />
      <StartPanel>
        <Header>Administrator</Header>
        <Columns>
          <LeftColumn>
            {pinned.map((item) => (
              <AppItem key={item.label} {...item} />
            ))}
            <Divider $gap="11px 0 1px" />
            {recent.map((item) => (
              <AppItem key={item.label} {...item} />
            ))}
            <Divider $gap="4px 0 1px" />
            <AllPrograms>
              <Text>所有程序(&P)</Text>
              <Arrow />
            </AllPrograms>
          </LeftColumn>
          <RightColumn>
            {places.map((group, i) => (
              <React.Fragment key={i}>
                {i > 0 && <Divider $gap="7px -4px 2.5px 0" />}
                {group.map(({ label, icon: Drawing, bold, more }) => (
                  <PlaceRow key={label}>
                    <Icon $size={33} viewBox="0 0 24 24">
                      <Drawing />
                    </Icon>
                    <Text $bold={bold}>{label}</Text>
                    {more && <Arrow $end />}
                  </PlaceRow>
                ))}
              </React.Fragment>
            ))}
          </RightColumn>
        </Columns>
        <Footer>
          <FooterButton>
            <Icon $size={32} viewBox="0 0 24 24">
              <LogOffIcon />
            </Icon>
            <Text>注销(&L)</Text>
          </FooterButton>
          <FooterButton>
            <Icon $size={32} viewBox="0 0 24 24">
              <ShutDownIcon />
            </Icon>
            <Text>关机(&U)</Text>
          </FooterButton>
        </Footer>
      </StartPanel>
      <Taskbar>
        <StartButton />
      </Taskbar>

      <Submenu>
        {tools.map(([label, Drawing]) => (
          <ToolRow key={label}>
            <Icon $size={22} viewBox="0 0 16 16">
              <Drawing />
            </Icon>
            <Text>{label}</Text>
          </ToolRow>
        ))}
      </Submenu>

      <Highlight $x={506} $y={17} $w={322} $h={52} />
      <Highlight $x={273} $y={140} $w={206} $h={59} />
      <Pointer viewBox="0 0 13 22">
        <path
          d="M1 1v16.4l3.8-3.6 2.6 6.2 2.6-1.1L7.4 13h5.2z"
          fill="#fff"
          stroke="#000"
          strokeWidth=".9"
          strokeLinejoin="round"
        />
      </Pointer>
    </Desktop>
  );
}

export default App;
